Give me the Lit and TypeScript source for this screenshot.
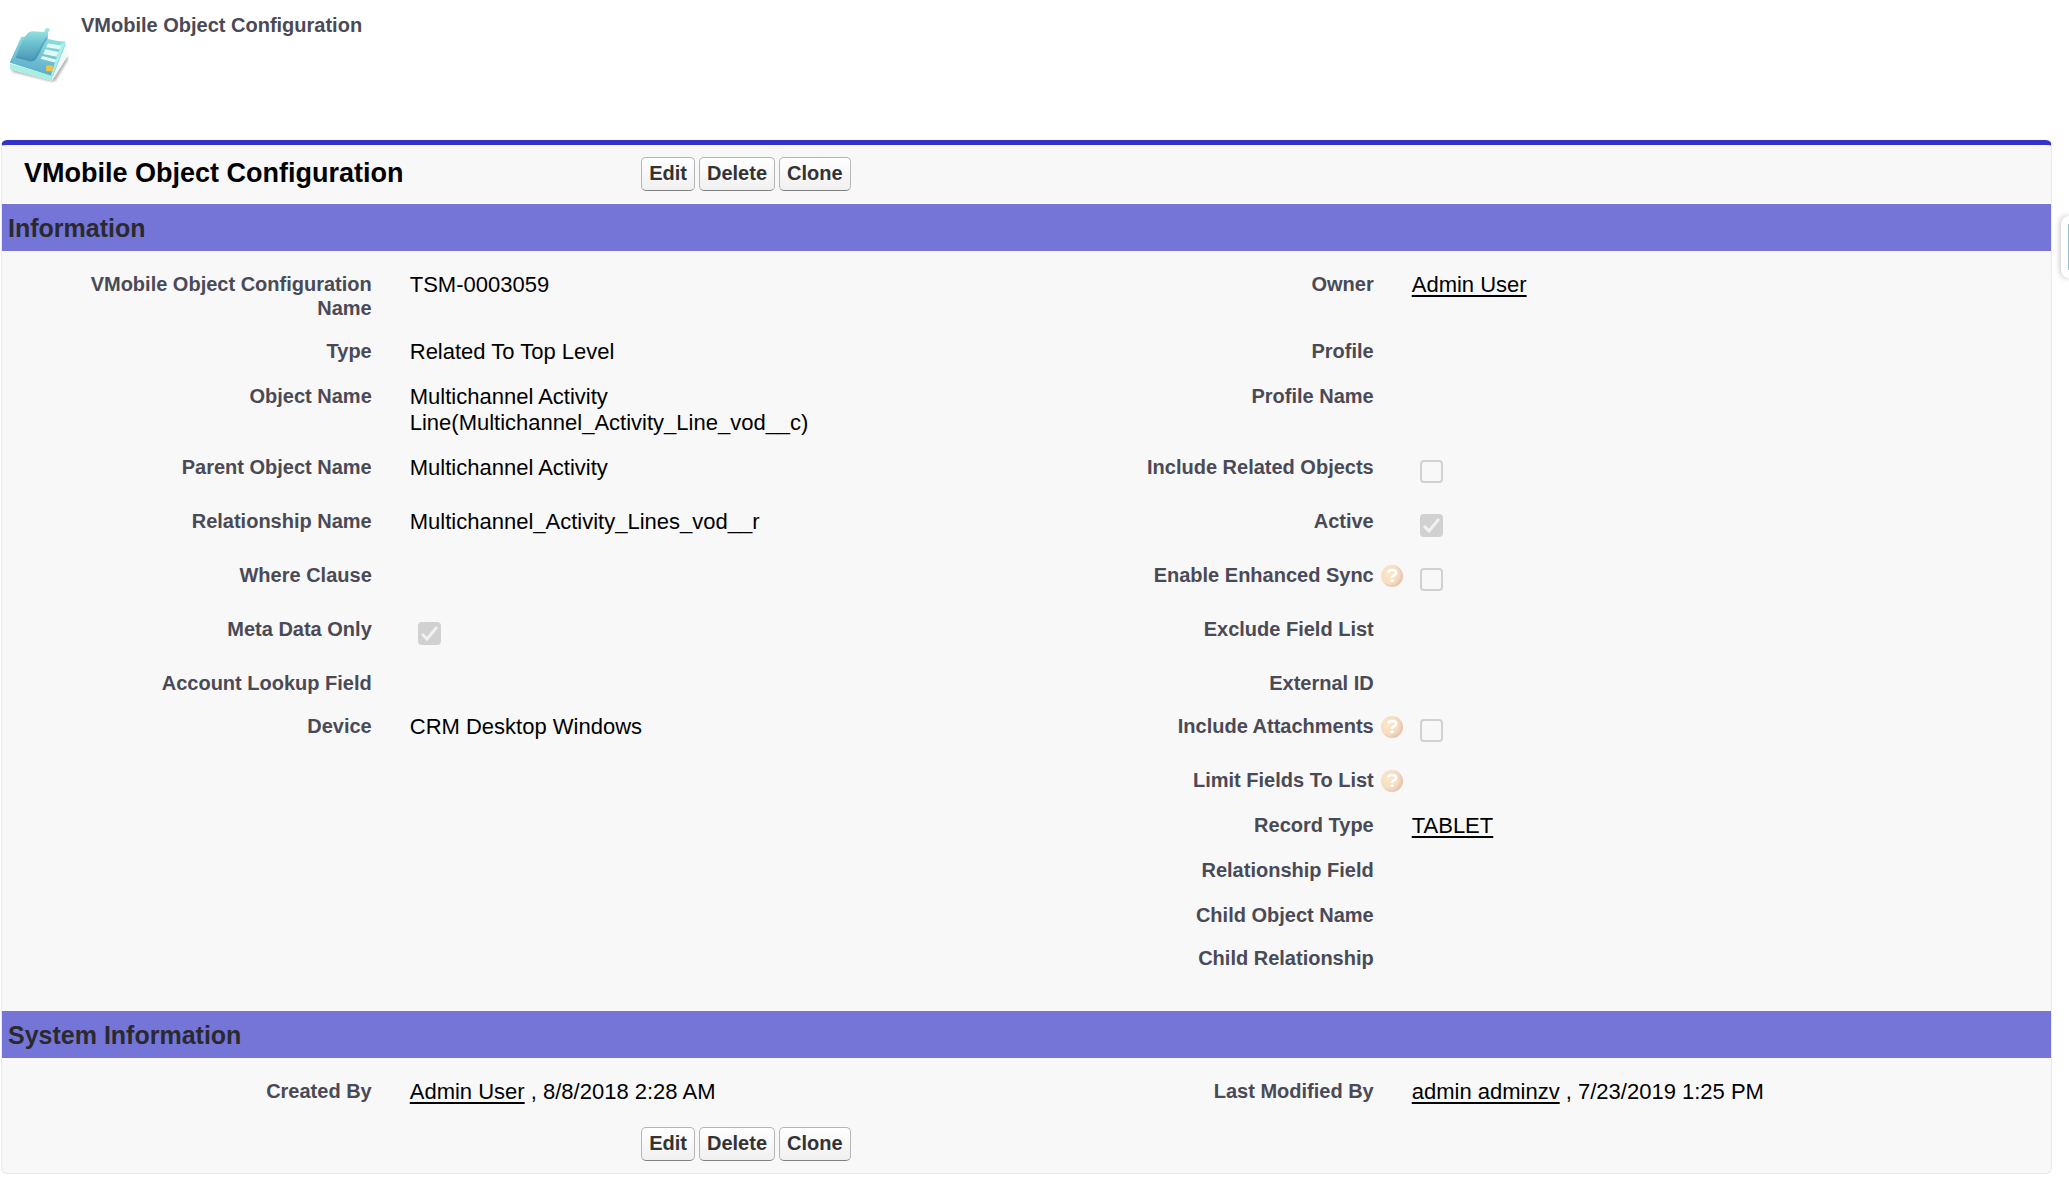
import { LitElement, html, css, svg, nothing } from "lit";
import { customElement } from "lit/decorators.js";

interface Field {
  label: string;
  text?: string;
  link?: string;
  check?: boolean;
  help?: boolean;
}

type Row = [size: string, left: Field | null, right: Field | null];

const rows: Row[] = [
  ["", { label: "VMobile Object Configuration Name", text: "TSM-0003059" }, { label: "Owner", link: "Admin User" }],
  ["", { label: "Type", text: "Related To Top Level" }, { label: "Profile" }],
  ["", { label: "Object Name", text: "Multichannel Activity Line(Multichannel_Activity_Line_vod__c)" }, { label: "Profile Name" }],
  ["tall", { label: "Parent Object Name", text: "Multichannel Activity" }, { label: "Include Related Objects", check: false }],
  ["tall", { label: "Relationship Name", text: "Multichannel_Activity_Lines_vod__r" }, { label: "Active", check: true }],
  ["tall", { label: "Where Clause" }, { label: "Enable Enhanced Sync", check: false, help: true }],
  ["tall", { label: "Meta Data Only", check: true }, { label: "Exclude Field List" }],
  ["short", { label: "Account Lookup Field" }, { label: "External ID" }],
  ["tall", { label: "Device", text: "CRM Desktop Windows" }, { label: "Include Attachments", check: false, help: true }],
  ["", null, { label: "Limit Fields To List", help: true }],
  ["", null, { label: "Record Type", link: "TABLET" }],
  ["", null, { label: "Relationship Field" }],
  ["short", null, { label: "Child Object Name" }],
  ["", null, { label: "Child Relationship" }],
];

const systemRows: Row[] = [
  ["", { label: "Created By", link: "Admin User", text: " , 8/8/2018 2:28 AM" }, { label: "Last Modified By", link: "admin adminzv", text: " , 7/23/2019 1:25 PM" }],
];

const phoneIcon = html`<svg class="logo" viewBox="0 0 64 60" aria-hidden="true">${svg`
  <defs>
    <linearGradient id="base" x1="0.6" y1="0" x2="0.4" y2="1"><stop offset="0" stop-color="#8edfe0"/><stop offset="1" stop-color="#58a9c9"/></linearGradient>
    <linearGradient id="hand" x1="0.5" y1="0" x2="0.5" y2="1"><stop offset="0" stop-color="#a2ebe4"/><stop offset="0.45" stop-color="#6fc3d1"/><stop offset="1" stop-color="#4b94b8"/></linearGradient>
    <filter id="soft" x="-20%" y="-20%" width="140%" height="140%"><feGaussianBlur stdDeviation="1"/></filter>
  </defs>
  <path d="M3 45L5 49L46 59L50 58L63 36L62 32Z" fill="#888" opacity="0.6" filter="url(#soft)"/>
  <path d="M3 38L2 46L46 58L62 33V22L59 18Z" fill="#eefaf8"/>
  <path d="M2 40L2 46L46 58L47 53Z" fill="#a9eee1"/>
  <path d="M47 53L46 58L62 33L60 20Z" fill="#f2fbfa"/>
  <path d="M2 39L12 17L59 17Q61 17 60 21L47 53Z" fill="url(#base)"/>
  <path d="M2 39L14 12H28L41 14L60 18L47 53Z" fill="url(#base)"/>
  <path d="M60 18L47 53L45 52L56 19Z" fill="#a8f1e3"/>
  <path d="M8 34C12 24 14 16 20 9Q22 6 26 6L38 7L39 4L42 2L44 5L42 7L42 13C36 19 35 28 29 36Q27 38 23 37Z" fill="url(#hand)"/>
  <path d="M41 13C36 19 33 28 28 35Q26 38 22 37L9 33" fill="none" stroke="#438fb2" stroke-width="2" opacity="0.5"/>
  <path d="M42 19L56 21L54 25L40 23ZM39 25L53 28L51 33L37 30ZM36 32L51 36L49 39L34 35Z" fill="#e1faf6"/>
  <rect x="40" y="42" width="7" height="6" rx="1" fill="#f2c24c"/>
`}</svg>`;

const helpIcon = html`<svg class="help" viewBox="0 0 22 22" role="img" aria-label="Help">${svg`
  <defs>
    <radialGradient id="orb" cx="0.35" cy="0.4" r="0.7"><stop offset="0" stop-color="#fae8c8"/><stop offset="0.6" stop-color="#f5dec2"/><stop offset="1" stop-color="#e3bdaa"/></radialGradient>
  </defs>
  <circle cx="11" cy="11" r="11" fill="url(#orb)"/>
  <path d="M7 7.600Q7.500 5 11 5Q15 5 15 7.800Q15 9.500 12.500 10.600Q11 11.300 11 13" fill="none" stroke="#fff" stroke-width="2.600"/>
  <rect x="9.500" y="14.500" width="3" height="2.500" fill="#fff"/>
`}</svg>`;

@customElement("app-root")
export class AppRoot extends LitElement {
  static styles = css`
    :host {
      display: block;
      font-family: "Liberation Sans", Arial, sans-serif;
      font-size: 22px;
      line-height: 26px;
      color: #000;
      background: #fff;
    }
    * { box-sizing: border-box; }
    h1, h2, h3 { margin: 0; }
    .page-head {
      display: flex;
      align-items: flex-start;
      gap: 12px;
      height: 140px;
      padding: 13px 8px;
    }
    .logo { width: 61px; height: 58px; margin-top: 12px; }
    .page-head h1 { font-size: 20px; line-height: 24px; color: #4a4a56; }
    .block {
      margin: 0 17px 0 1px;
      border: 1px solid #eaeaea;
      border-top: 5px solid #3333cc;
      border-radius: 6px;
      background: #f8f8f8;
    }
    .bar { display: flex; align-items: center; height: 59px; }
    .bar.top { border-bottom: 1px solid #fff; }
    .bar h2 { padding-bottom: 2px; font-size: 27px; line-height: 32px; }
    .bar-title { width: 31%; padding-left: 22px; flex: none; margin-right: 4px; }
    .buttons { display: flex; gap: 4px; }
    button {
      height: 34px;
      padding: 0 7px 2px;
      border: 1px solid #b5b5b5;
      border-bottom-color: #7f7f7f;
      border-radius: 5px;
      background: linear-gradient(#fff, #f0f0f0);
      font: bold 20px/24px "Liberation Sans", Arial, sans-serif;
      color: #333;
    }
    .band {
      padding: 9px 6px 8px;
      background: #7575d8;
      font-size: 25px;
      line-height: 30px;
      color: #2a2a2e;
    }
    .fields { padding: 11px 18px 0 27px; }
    .main { padding-bottom: 30px; }
    table { width: 100%; border-collapse: collapse; table-layout: fixed; }
    .label-col { width: 19%; }
    .data-col { width: 31%; }
    th, td { height: 45px; padding: 10px 0 9px; vertical-align: top; text-align: left; }
    .tall > * { height: 54px; }
    .short > * { height: 43px; padding-bottom: 7px; }
    .tag { display: flex; justify-content: flex-end; padding-left: 40px; font-size: 20px; line-height: 24px; color: #4a4a56; text-align: right; }
    .slot { flex: none; width: 38px; padding-left: 7px; }
    .help { display: block; width: 22px; height: 22px; margin-top: 2px; }
    td { padding-right: 40px; }
    a { color: #000; text-decoration: underline; text-decoration-thickness: 2px; text-underline-offset: 3px; }
    input {
      appearance: none;
      display: block;
      width: 23px;
      height: 23px;
      margin: 5px 8px 0;
      border: 2px solid #d1d1d1;
      border-radius: 4px;
      background: #f8f8f8;
    }
    .tall input { margin-bottom: -2px; }
    input:checked {
      background: #d1d1d1 url('data:image/svg+xml,<svg xmlns="http://www.w3.org/2000/svg" viewBox="0 0 19 19"><path d="M2 10L7 15L17 3" fill="none" stroke="white" stroke-opacity="0.700" stroke-width="3"/></svg>') center / 19px 19px no-repeat;
    }
    .side-tab {
      position: absolute;
      top: 216px;
      right: 0;
      width: 8px;
      height: 62px;
      padding: 8px 0 8px 7px;
      border: 0;
      border-radius: 8px 0 0 8px;
      background: #fff;
      box-shadow: 0 0 6px rgba(0, 0, 0, 0.3);
    }
    .side-tab span { display: block; height: 46px; background: #9dbdcb; }
  `;

  private buttons() {
    return html`<div class="buttons">
      <button type="button">Edit</button><button type="button">Delete</button><button type="button">Clone</button>
    </div>`;
  }

  private cells(f: Field | null, id: string) {
    if (!f) return html`<td></td><td></td>`;
    const hasCheck = f.check !== undefined;
    return html`
      <th scope="row"><div class="tag">
        ${hasCheck ? html`<label for=${id}>${f.label}</label>` : html`<span>${f.label}</span>`}
        <div class="slot">${f.help ? helpIcon : nothing}</div>
      </div></th>
      <td>${hasCheck ? html`<input type="checkbox" id=${id} .checked=${f.check!} disabled />` : nothing}${f.link ? html`<a href="#">${f.link}</a>` : nothing}${f.text ?? nothing}</td>`;
  }

  private table(data: Row[], name: string) {
    return html`<table>
      <colgroup><col class="label-col" /><col class="data-col" /><col class="label-col" /><col class="data-col" /></colgroup>
      <tbody>
        ${data.map(([size, a, b], i) => html`<tr class=${size}>${this.cells(a, `${name}-a${i}`)}${this.cells(b, `${name}-b${i}`)}</tr>`)}
      </tbody>
    </table>`;
  }

  render() {
    return html`
      <header class="page-head">${phoneIcon}<h1>VMobile Object Configuration</h1></header>
      <main class="block">
        <div class="bar top">
          <div class="bar-title"><h2>VMobile Object Configuration</h2></div>
          ${this.buttons()}
        </div>
        <h3 class="band">Information</h3>
        <div class="fields main">${this.table(rows, "info")}</div>
        <h3 class="band">System Information</h3>
        <div class="fields">${this.table(systemRows, "system")}</div>
        <div class="bar"><div class="bar-title"></div>${this.buttons()}</div>
      </main>
      <button class="side-tab" type="button" aria-label="Open panel"><span></span></button>
    `;
  }
}
